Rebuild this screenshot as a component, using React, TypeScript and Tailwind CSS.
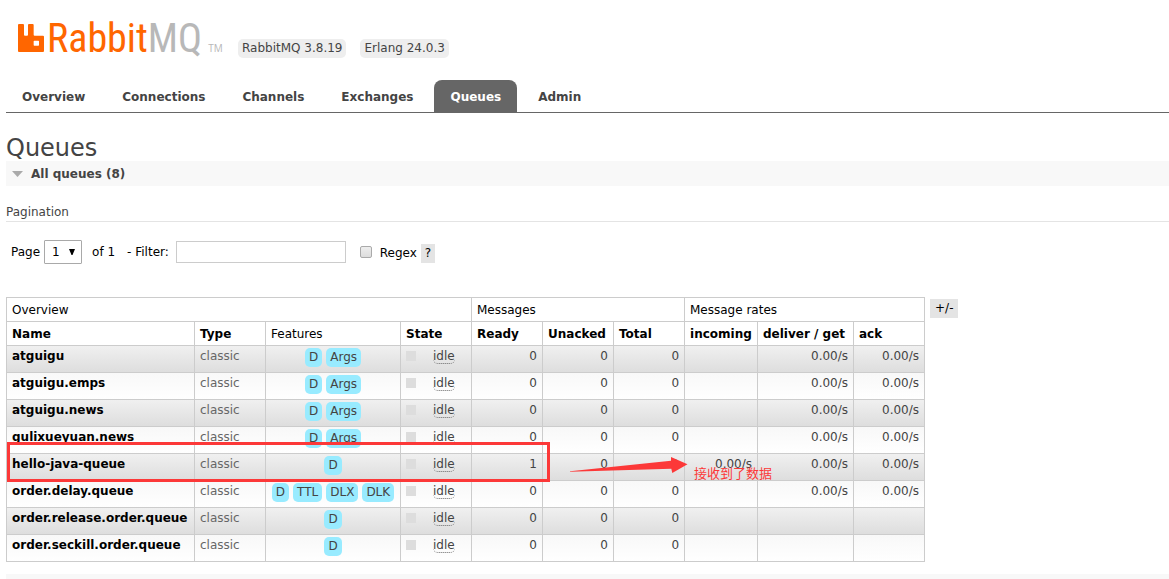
import clsx from "clsx";

type Queue = {
  name: string;
  features: string[];
  ready: number;
  incoming?: string;
  deliver?: string;
  ack?: string;
};

const tabs = ["Overview", "Connections", "Channels", "Exchanges", "Queues", "Admin"];

const queues: Queue[] = [
  { name: "atguigu", features: ["D", "Args"], ready: 0, deliver: "0.00/s", ack: "0.00/s" },
  { name: "atguigu.emps", features: ["D", "Args"], ready: 0, deliver: "0.00/s", ack: "0.00/s" },
  { name: "atguigu.news", features: ["D", "Args"], ready: 0, deliver: "0.00/s", ack: "0.00/s" },
  { name: "gulixueyuan.news", features: ["D", "Args"], ready: 0, deliver: "0.00/s", ack: "0.00/s" },
  {
    name: "hello-java-queue",
    features: ["D"],
    ready: 1,
    incoming: "0.00/s",
    deliver: "0.00/s",
    ack: "0.00/s",
  },
  {
    name: "order.delay.queue",
    features: ["D", "TTL", "DLX", "DLK"],
    ready: 0,
    deliver: "0.00/s",
    ack: "0.00/s",
  },
  { name: "order.release.order.queue", features: ["D"], ready: 0 },
  { name: "order.seckill.order.queue", features: ["D"], ready: 0 },
];

const columns = [
  { label: "Name", width: "w-[188px]", sortable: true },
  { label: "Type", width: "w-[71px]", sortable: true },
  { label: "Features", width: "w-[135px]", sortable: false },
  { label: "State", width: "w-[71px]", sortable: true },
  { label: "Ready", width: "w-[71px]", sortable: true },
  { label: "Unacked", width: "w-[71px]", sortable: true },
  { label: "Total", width: "w-[71px]", sortable: true },
  { label: "incoming", width: "w-[73px]", sortable: true },
  { label: "deliver / get", width: "w-[96px]", sortable: true },
  { label: "ack", width: "w-[71px]", sortable: true },
];

const Logo = () => (
  <a href="#/" className="flex h-10 w-[211px] items-center">
    <svg viewBox="0 0 78 84" className="h-7 w-[26px] shrink-0 fill-[#ff6600]" aria-hidden="true">
      <path
        fillRule="evenodd"
        d="M0 3q0-3 3-3h12q3 0 3 3v29q0 3 3 3h6q3 0 3-3V3q0-3 3-3h11q3 0 3 3v29q0 3 3 3h25q3 0 3 3v43q0 3-3 3H3q-3 0-3-3zM49 50q-2 0-2 2v11q0 2 2 2h12q2 0 2-2V52q0-2-2-2z"
      />
    </svg>
    <span className="ml-[3px] pt-[2px] font-['Roboto_Condensed',Roboto,sans-serif] text-[40px] leading-10 text-[#ff6600]">
      Rabbit<span className="text-[#b8b8b8]">MQ</span>
    </span>
    <span className="mt-5 ml-[6px] font-['Open_Sans',sans-serif] text-[10px] leading-3 text-[#b8b8b8]">
      TM
    </span>
  </a>
);

const Header = () => (
  <header>
    <div className="flex h-20 items-start pt-[18px] pl-3">
      <Logo />
      <ul className="ml-[9px] flex gap-[14px] pt-[21px]">
        {["RabbitMQ 3.8.19", "Erlang 24.0.3"].map((version) => (
          <li key={version} className="rounded-[5px] bg-[#eee] px-1 leading-[19px]">
            {version}
          </li>
        ))}
      </ul>
    </div>
    <nav className="flex gap-[5px] border-b border-[#666]">
      {tabs.map((tab) => (
        <a
          key={tab}
          href={`#/${tab.toLowerCase()}`}
          className={clsx(
            "rounded-t-lg px-4 pt-[2px] leading-[30px] font-bold",
            tab === "Queues" ? "bg-[#666] text-white" : "text-[#444]",
          )}
        >
          {tab}
        </a>
      ))}
    </nav>
  </header>
);

const Pagination = () => (
  <form className="flex items-center pt-[18px] pl-[5px] text-black">
    <label htmlFor="page">Page</label>
    <div className="relative ml-1">
      <select
        id="page"
        className="h-6 w-[38px] appearance-none rounded-[1px] border border-[#a9a9a9] bg-white pl-[7px] outline-none"
      >
        <option>1</option>
      </select>
      <svg
        viewBox="0 0 6 6"
        className="pointer-events-none absolute top-[9px] right-[7px] size-[6px] fill-black"
        aria-hidden="true"
      >
        <path d="M0 0h6L3.500 6h-1z" />
      </svg>
    </div>
    <span className="ml-[10px]">of 1</span>
    <label htmlFor="filter" className="ml-3">
      - Filter:
    </label>
    <input
      id="filter"
      type="text"
      className="ml-[7px] h-[22px] w-[170px] border border-[#ccc] bg-white px-1 outline-none"
    />
    <input
      id="regex"
      type="checkbox"
      className="ml-[14px] size-3 appearance-none rounded-[2px] border border-[#aaa] bg-linear-to-b from-[#eee] to-[#ddd]"
    />
    <label htmlFor="regex" className="ml-2 pt-[2px]">
      Regex
    </label>
    <button type="button" className="mt-[2px] ml-1 bg-[#e4e4e4] px-1 leading-[19px]">
      ?
    </button>
  </form>
);

const cell = "border border-[#ccc] px-[5px]";

const QueueRow = ({ queue, striped }: { queue: Queue; striped: boolean }) => (
  <tr
    className={clsx(
      "h-[27px] bg-linear-to-b align-top leading-[14px]",
      striped ? "from-[#f0f0f0] to-[#ddd]" : "from-[#f8f8f8] to-white",
    )}
  >
    <td className={clsx(cell, "pt-[3px]")}>
      <a href={`#/queues/${queue.name}`} className="font-bold text-black">
        {queue.name}
      </a>
    </td>
    <td className={clsx(cell, "pt-[3px] text-[#666]")}>classic</td>
    <td className={clsx(cell, "pt-[2px]")}>
      <div className="flex justify-center gap-1">
        {queue.features.map((feature) => (
          <span key={feature} className="rounded-[5px] bg-[#98ebff] px-1 leading-[19px]">
            {feature}
          </span>
        ))}
      </div>
    </td>
    <td className={clsx(cell, "pt-[3px]")}>
      <div className="flex items-start">
        <span className="mt-[2px] size-[10px] bg-[#ddd]" />
        <span className="ml-[17px] rounded-[5px] border-b border-dotted border-[#666]">idle</span>
      </div>
    </td>
    <td className={clsx(cell, "pt-[3px] text-right")}>{queue.ready}</td>
    <td className={clsx(cell, "pt-[3px] text-right")}>0</td>
    <td className={clsx(cell, "pt-[3px] text-right")}>{queue.ready}</td>
    <td className={clsx(cell, "pt-[3px] text-right")}>{queue.incoming}</td>
    <td className={clsx(cell, "pt-[3px] text-right")}>{queue.deliver}</td>
    <td className={clsx(cell, "pt-[3px] text-right")}>{queue.ack}</td>
  </tr>
);

/* Red marks drawn over the hello-java-queue row */
const Annotation = () => (
  <div className="pointer-events-none absolute inset-0 text-[#fc3838]">
    <div className="absolute top-[145px] left-px h-10 w-[543px] border-3 border-[#fc3838]" />
    <svg
      viewBox="0 0 118 18"
      className="absolute top-[159px] left-[564px] h-[18px] w-[118px] fill-current"
      aria-hidden="true"
    >
      <path d="M0 15.200L101 4.700V1l16.500 7.300L102.300 17l-1-4.300L0 15.700z" />
    </svg>
    <span className="absolute top-[166px] left-[688px] font-['Noto_Sans_CJK_SC',sans-serif] text-[13px] leading-5 whitespace-nowrap">
      接收到了数据
    </span>
  </div>
);

const QueueTable = () => (
  <div className="mt-[33px] flex items-start">
    <div className="relative">
      <table className="w-[919px] table-fixed border-collapse whitespace-nowrap">
        <colgroup>
          {columns.map((column) => (
            <col key={column.label} className={column.width} />
          ))}
        </colgroup>
        <thead className="text-left text-black">
          <tr className="h-6">
            <th colSpan={4} className={clsx(cell, "font-normal")}>
              Overview
            </th>
            <th colSpan={3} className={clsx(cell, "font-normal")}>
              Messages
            </th>
            <th colSpan={3} className={clsx(cell, "font-normal")}>
              Message rates
            </th>
          </tr>
          <tr className="h-6">
            {columns.map((column) => (
              <th key={column.label} className={clsx(cell, !column.sortable && "font-normal")}>
                {column.sortable ? <a href="#/queues">{column.label}</a> : column.label}
              </th>
            ))}
          </tr>
        </thead>
        <tbody>
          {queues.map((queue, index) => (
            <QueueRow key={queue.name} queue={queue} striped={index % 2 === 0} />
          ))}
        </tbody>
      </table>
      <Annotation />
    </div>
    <button type="button" className="mt-[2px] ml-[5px] bg-[#e4e4e4] px-[5px] leading-[19px] text-black">
      +/-
    </button>
  </div>
);

export default function App() {
  return (
    <div className="bg-white pl-[6px] font-['DejaVu_Sans',Verdana,sans-serif] text-[12px] leading-4 text-[#444]">
      <Header />
      <main>
        <h1 className="pt-[22px] text-2xl leading-[26px]">Queues</h1>
        <h2 className="flex h-[25px] items-center bg-[#f8f8f8] pl-[6px] font-bold">
          <svg viewBox="0 0 11 6" className="mr-2 h-[6px] w-[11px] fill-[#aaa]" aria-hidden="true">
            <path d="M0 0h11L5.500 6z" />
          </svg>
          All queues (8)
        </h2>
        <h3 className="mt-[18px] border-b border-[#e4e4e4] pb-px">Pagination</h3>
        <Pagination />
        <QueueTable />
        <div className="mt-3 h-[5px] bg-[#f8f8f8]" />
      </main>
    </div>
  );
}
